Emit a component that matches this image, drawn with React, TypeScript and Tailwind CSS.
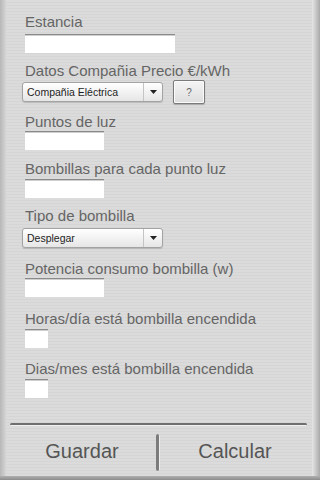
import React from "react";

const font = { fontFamily: '"Liberation Sans", Arial, sans-serif' };

function Label({ children, className = "" }: { children: React.ReactNode; className?: string }) {
  return (
    <div className={"text-[15px] leading-[19px] text-[#656565] whitespace-nowrap " + className}>{children}</div>
  );
}

function TextBox({ w, className = "" }: { w: string; className?: string }) {
  return (
    <div
      className={
        "h-[19px] bg-white border-t border-t-[#8a8a8a] shadow-[inset_0_1px_0_#cfcfcf] " + w + " " + className
      }
    />
  );
}

function Select({ text }: { text: string }) {
  return (
    <div className="w-[141px] h-[20px] rounded-[3px] border border-[#a3a3a3] bg-gradient-to-b from-white to-[#e6e6e6] flex items-center shadow-[0_1px_1px_rgba(0,0,0,0.15)]">
      <div className="flex-1 pl-[4px] text-[10.5px] text-[#1e1e1e] leading-none pt-[1px]">{text}</div>
      <div className="w-px h-[18px] bg-[#c4c4c4]" />
      <div className="w-[18px] flex items-center justify-center">
        <svg width="7" height="4" viewBox="0 0 7 4">
          <path d="M0 0 L7 0 L3.5 4 Z" fill="#222" />
        </svg>
      </div>
    </div>
  );
}

export default function App() {
  return (
    <div
      style={font}
      className="relative w-[320px] h-[480px] overflow-hidden bg-[#d9d9d9] bg-[repeating-linear-gradient(0deg,#d5d5d5_0px,#d5d5d5_1px,#dbdbdb_1px,#dbdbdb_3px)] flex flex-col"
    >
      {/* frame edges */}
      <div className="absolute left-0 top-0 bottom-0 w-[6px] bg-gradient-to-r from-[#b7b7b7] to-[#d6d6d6]" />
      <div className="absolute right-0 top-0 bottom-0 w-[8px] bg-gradient-to-r from-[#e6e6e6] via-[#c8c8c8] to-[#a9a9a9]" />
      <div className="absolute left-0 right-0 bottom-0 h-[4px] bg-gradient-to-b from-[#b0b0b0] to-[#8c8c8c]" />

      <div className="relative flex flex-col pl-[25px] pt-[12px]">
        <Label>Estancia</Label>
        <TextBox w="w-[150px]" className="mt-[3px]" />

        <Label className="mt-[8px]">Datos Compañia Precio €/kWh</Label>
        <div className="flex items-center h-[24px] -ml-[3px]">
          <Select text="Compañia Eléctrica" />
          <div className="ml-[10px] w-[32px] h-[24px] rounded-[2px] border border-[#7a7a7a] bg-gradient-to-b from-[#f4f4f4] to-[#dedede] shadow-[inset_0_0_0_1px_#fafafa,0_1px_1px_rgba(0,0,0,0.2)] flex items-center justify-center text-[10px] text-[#666]">
            ?
          </div>
        </div>

        <Label className="mt-[8px]">Puntos de luz</Label>
        <TextBox w="w-[79px]" />

        <Label className="mt-[9px]">Bombillas para cada punto luz</Label>
        <TextBox w="w-[79px]" className="mt-[1px]" />

        <Label className="mt-[8px]">Tipo de bombilla</Label>
        <div className="mt-[3px] -ml-[3px]">
          <Select text="Desplegar" />
        </div>

        <Label className="mt-[11px]">Potencia consumo bombilla (w)</Label>
        <TextBox w="w-[79px]" />

        <Label className="mt-[12px]">Horas/día está bombilla encendida</Label>
        <TextBox w="w-[23px]" className="mt-[1px]" />

        <Label className="mt-[11px]">Dias/mes está bombilla encendida</Label>
        <TextBox w="w-[23px]" className="mt-[1px]" />
      </div>

      <div className="relative mt-auto mb-[4px]">
        <div className="mx-[10px] w-[297px] h-[3px] rounded-full bg-[#6f6f6f] border-b border-b-[#f0f0f0]" />
        <div className="flex items-center h-[50px]">
          <div className="w-[156px] text-center text-[20px] text-[#555] leading-none pl-[8px]">Guardar</div>
          <div className="w-[4px] h-[37px] rounded-full bg-[#7c7c7c] border-r border-r-[#efefef] mt-[2px]" />
          <div className="flex-1 text-center text-[20px] text-[#555] leading-none pr-[10px]">Calcular</div>
        </div>
      </div>
    </div>
  );
}
